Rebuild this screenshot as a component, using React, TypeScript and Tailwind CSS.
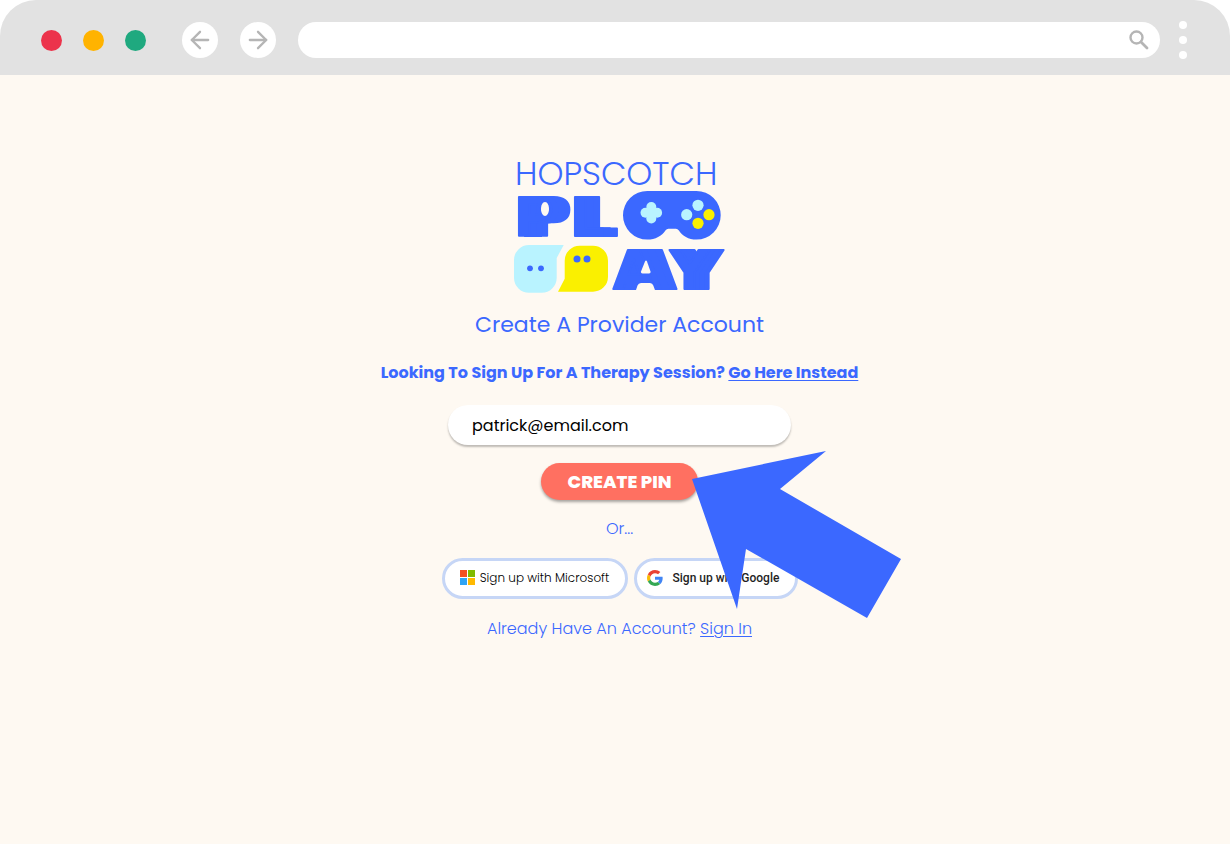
import React, { useState } from 'react';
import { ArrowLeft, ArrowRight } from 'lucide-react';

function BrowserBar() {
  return (
    <header className="flex h-[75px] items-center rounded-t-[36px] bg-[#e2e2e2] pt-[5px] pr-[43px] pl-[41px]">
      <div className="flex gap-[21px]">
        <span className="size-[21px] rounded-full bg-[#ec334b]" />
        <span className="size-[21px] rounded-full bg-[#ffb300]" />
        <span className="size-[21px] rounded-full bg-[#1fa97f]" />
      </div>
      <nav className="ml-9 flex gap-[22px]">
        <button aria-label="Back" className="flex size-9 items-center justify-center rounded-full bg-white text-[#b5b5b5]">
          <ArrowLeft className="size-7" strokeWidth={2} />
        </button>
        <button aria-label="Forward" className="flex size-9 items-center justify-center rounded-full bg-white text-[#b5b5b5]">
          <ArrowRight className="size-7" strokeWidth={2} />
        </button>
      </nav>
      <div className="ml-[22px] flex h-9 flex-1 items-center rounded-full bg-white pr-[11px] pl-5">
        <input aria-label="Address" type="text" className="min-w-0 flex-1 outline-none" />
        <button aria-label="Search" className="text-[#b5b5b5]">
          <svg viewBox="0 0 20 20" className="size-5" fill="none" stroke="currentColor">
            <circle cx="7.5" cy="7.5" r="6" strokeWidth="2.400" />
            <path d="M12 12l6 6" strokeWidth="2.800" strokeLinecap="round" />
          </svg>
        </button>
      </div>
      <button aria-label="Menu" className="ml-[19px] flex flex-col gap-[7px]">
        <span className="size-2 rounded-full bg-white" />
        <span className="size-2 rounded-full bg-white" />
        <span className="size-2 rounded-full bg-white" />
      </button>
    </header>
  );
}

function Logo() {
  return (
    <svg viewBox="0 0 212 138" className="h-[138px] w-[212px] overflow-visible" fill="#3b68ff" role="img" aria-label="Hopscotch Playday">
      <text x="1" y="28" className="text-[33px] font-light">HOPSCOTCH</text>

      <g className="font-['DejaVu_Sans',sans-serif] text-[54px] font-bold" stroke="#3b68ff" strokeWidth="2" strokeLinejoin="round">
        <text x="0" y="79" className="[filter:drop-shadow(6px_0_#3b68ff)_drop-shadow(6px_0_#3b68ff)_drop-shadow(6px_0_#3b68ff)]">P</text>
        <text x="56" y="79" className="[filter:drop-shadow(7px_0_#3b68ff)_drop-shadow(7px_0_#3b68ff)]">L</text>
        <text x="99" y="132" className="[filter:drop-shadow(6px_0_#3b68ff)_drop-shadow(8px_0_#3b68ff)_drop-shadow(8px_0_#3b68ff)]">A</text>
        <text x="156" y="132" className="[filter:drop-shadow(4px_0_#3b68ff)_drop-shadow(5px_0_#3b68ff)_drop-shadow(5px_0_#3b68ff)]">Y</text>
      </g>
      {/* letter counters */}
      <g fill="#fef9f2">
        <path d="M31 45c2.500 0 4 3.500 4 7 0 4-2 7-4 7s-4-3-4-7c0-3.500 1.500-7 4-7z" />
        <path d="M131 104.500q1-2 2 0l3.500 10q.5 2-1.500 2h-6.500q-2 0-1.500-2z" />
        <path d="M121.500 134.500l2-6q1-2.500 3.500-2.500h9q2.500 0 3.300 2.500l2.200 6z" />
      </g>

      {/* controller */}
      <path d="M133.300 34h49.100a24.300 24.300 0 0 1 0 48.600c-8 0-14-4-17.500-9.200q-1.300-1.700-3-1.700h-7.500q-1.700 0-3 1.700c-3.500 5.200-10 9.200-18.100 9.200a24.300 24.300 0 0 1 0-48.600z" />
      <g fill="#b9f3ff">
        <circle cx="137.300" cy="50" r="5" />
        <circle cx="137.300" cy="61.500" r="5" />
        <circle cx="131.500" cy="55.700" r="5" />
        <circle cx="143.100" cy="55.700" r="5" />
        <circle cx="137.300" cy="55.700" r="5" />
        <circle cx="184" cy="48.300" r="5.600" />
        <circle cx="172.700" cy="57.700" r="5.600" />
      </g>
      <circle cx="195" cy="57.700" r="5.600" fill="#faf000" />
      <circle cx="184" cy="66.300" r="5.600" fill="#faf000" />

      {/* speech bubbles */}
      <path d="M15 88h34.700l-7 13v20a15 15 0 0 1-15 14.700H15a15 15 0 0 1-15-14.700v-18a15 15 0 0 1 15-15z" fill="#b9f3ff" />
      <path d="M66 88.700h13a15 15 0 0 1 15 15v16a15 15 0 0 1-15 15H44l6.700-13v-18a15 15 0 0 1 15.300-15z" fill="#faf000" />
      <circle cx="16" cy="111.300" r="2.900" />
      <circle cx="27" cy="111.300" r="2.900" />
      <circle cx="63" cy="102" r="3.500" />
      <circle cx="73" cy="102" r="3.500" />
    </svg>
  );
}

function MicrosoftLogo() {
  return (
    <svg viewBox="0 0 15 15" className="size-[15px]">
      <path d="M0 0h7v7H0z" fill="#f25022" />
      <path d="M8 0h7v7H8z" fill="#7fba00" />
      <path d="M0 8h7v7H0z" fill="#2fa4f4" />
      <path d="M8 8h7v7H8z" fill="#ffb900" />
    </svg>
  );
}

function GoogleLogo() {
  return (
    <svg viewBox="0 0 48 48" className="size-4">
      <path fill="#EA4335" d="M24 9.500c3.540 0 6.710 1.220 9.210 3.600l6.850-6.850C35.900 2.380 30.470 0 24 0 14.620 0 6.510 5.380 2.560 13.220l7.980 6.190C12.430 13.720 17.740 9.500 24 9.500z" />
      <path fill="#4285F4" d="M46.980 24.550c0-1.570-.15-3.090-.38-4.550H24v9.020h12.940c-.58 2.960-2.260 5.480-4.780 7.180l7.730 6c4.510-4.180 7.090-10.360 7.090-17.650z" />
      <path fill="#FBBC05" d="M10.530 28.590c-.48-1.450-.76-2.990-.76-4.590s.27-3.140.76-4.590l-7.980-6.190C.92 16.460 0 20.120 0 24c0 3.880.92 7.540 2.560 10.780l7.970-6.190z" />
      <path fill="#34A853" d="M24 48c6.480 0 11.930-2.130 15.890-5.810l-7.730-6c-2.150 1.450-4.920 2.300-8.160 2.300-6.260 0-11.570-4.220-13.470-9.910l-7.980 6.190C6.510 42.620 14.620 48 24 48z" />
    </svg>
  );
}

export default function App() {
  const [email, setEmail] = useState('patrick@email.com');

  return (
    <div className="min-h-screen bg-white font-['Poppins','Inter',sans-serif]">
      <BrowserBar />
      <main className="flex min-h-[calc(100vh-75px)] flex-col items-center bg-[#fef9f2] pt-[82px] pb-10 pl-[9px] text-[#3b68ff]">
        <Logo />
        <h1 className="mt-3.5 text-[22px] leading-8">Create A Provider Account</h1>
        <p className="mt-5 text-base leading-6 font-bold">
          Looking To Sign Up For A Therapy Session?{' '}
          <a href="#" className="underline decoration-1 underline-offset-2">Go Here Instead</a>
        </p>

        <form className="flex flex-col items-center" onSubmit={(e) => e.preventDefault()}>
          <input
            type="email"
            aria-label="Email"
            value={email}
            onChange={(e) => setEmail(e.target.value)}
            className="mt-5 h-10 w-[343px] rounded-full bg-white px-6 text-base text-black shadow-[0_2px_2px_rgba(0,0,0,0.25)] outline-none"
          />
          <div className="relative mt-[18px]">
            <button type="submit" className="h-[37px] w-[157px] rounded-full bg-[#ff7061] text-lg font-extrabold text-white shadow-[0_2px_3px_rgba(0,0,0,0.35)]">
              CREATE PIN
            </button>
            <svg viewBox="0 0 209 167" className="pointer-events-none absolute -top-3 left-full z-10 -ml-1.5 h-[167px] w-[209px]" fill="#3b68ff">
              <path d="M0 28L134 0 88 38l121 70-34 59L54 98l-9 60z" />
            </svg>
          </div>
        </form>

        <p className="mt-[17px] text-base leading-6 font-light">Or...</p>
        <div className="mt-[17px] flex gap-1.5">
          <button className="flex h-[41px] w-[186px] items-center justify-center gap-[5px] rounded-full border-[3px] border-[#c6d6f6] bg-white pb-0.5 text-xs font-light text-black">
            <MicrosoftLogo />
            Sign up with Microsoft
          </button>
          <button className="flex h-[41px] w-[164px] items-center gap-2.5 rounded-full border-[3px] border-[#c6d6f6] bg-white pb-0.5 pl-2.5 font-['Roboto',sans-serif] text-xs font-medium text-[#1f1f1f]">
            <GoogleLogo />
            Sign up with Google
          </button>
        </div>
        <p className="mt-[18px] text-base leading-6 font-light">
          Already Have An Account?{' '}
          <a href="#" className="underline decoration-1 underline-offset-2">Sign In</a>
        </p>
      </main>
    </div>
  );
}
